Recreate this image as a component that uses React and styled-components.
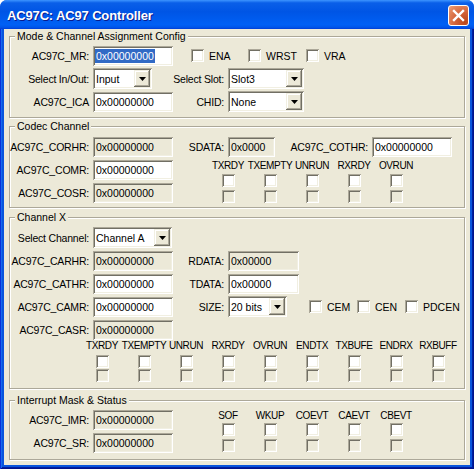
import styled, { createGlobalStyle } from "styled-components";

const GlobalStyle = createGlobalStyle`
  html, body {
    margin: 0;
    padding: 0;
    background: #fff;
  }
  body {
    font-family: "Liberation Sans", Arial, sans-serif;
    font-size: 10.5px;
    color: #000;
  }
  * {
    box-sizing: border-box;
  }
`;

const sunken = `
  box-shadow: inset 1px 1px 0 #aca899, inset -1px -1px 0 #fff,
    inset 2px 2px 0 #716f64, inset -2px -2px 0 #f1efe2;
`;

const raised = `
  box-shadow: inset -1px -1px 0 #716f64, inset 1px 1px 0 #f1efe2,
    inset -2px -2px 0 #aca899, inset 2px 2px 0 #fff;
`;

const Window = styled.div`
  width: 474px;
  height: 469px;
  display: flex;
  flex-direction: column;
  border-radius: 7px 7px 0 0;
  overflow: hidden;
  background: #0855dd;
`;

const TitleBar = styled.div`
  height: 29px;
  flex: none;
  display: flex;
  align-items: center;
  justify-content: space-between;
  padding: 0 5px 0 7px;
  background: linear-gradient(
    180deg,
    #3d95ff 0%,
    #0a5fe8 10%,
    #0055e5 40%,
    #0060f5 85%,
    #0056ea 94%,
    #003dd7 100%
  );
`;

const Title = styled.span`
  color: #fff;
  font: bold 13px "Liberation Sans", Arial, sans-serif;
  letter-spacing: -0.15px;
  text-shadow: 1px 1px 0 #0a1a8c;
  margin-top: 1px;
`;

const CloseButton = styled.button`
  width: 21px;
  height: 21px;
  margin-top: 2px;
  padding: 0;
  border: 1px solid #fff;
  border-radius: 3px;
  display: flex;
  align-items: center;
  justify-content: center;
  background: radial-gradient(
    circle at 85% 85%,
    #b9461b 0%,
    #d3643a 45%,
    #e4875d 80%,
    #efa57f 100%
  );
`;

const Frame = styled.div`
  flex: 1;
  display: flex;
  padding: 0 4px 4px;
  box-shadow: inset 1px 0 0 #0831d9, inset -1px -1px 0 #00138c,
    inset 2px 0 0 #166aee, inset -2px -2px 0 #001ea0;
`;

const Body = styled.div`
  flex: 1;
  background: #ece9d8;
  padding: 1px 5px 0;
  display: flex;
  flex-direction: column;
`;

const Group = styled.fieldset`
  margin: ${(p) => p.$mt || 0}px 0 0;
  padding: ${(p) => p.$pt}px 0 ${(p) => p.$pb}px;
  min-width: 0;
  border: 1px solid #aca899;
  box-shadow: 1px 1px 0 #fff, inset 1px 1px 0 #fff;
`;

const Legend = styled.legend`
  margin-left: 5px;
  padding: 0 2px;
  height: 13px;
  line-height: 13px;
  background: #ece9d8;
`;

const Rows = styled.div`
  display: flex;
  flex-direction: column;
  gap: 2px;
`;

const Split = styled.div`
  display: flex;
  align-items: flex-start;
`;

const Row = styled.div`
  display: flex;
  align-items: center;
  height: 21px;
`;

const Label = styled.span`
  width: ${(p) => p.$w}px;
  flex: none;
  padding-right: 4px;
  text-align: right;
  white-space: nowrap;
  letter-spacing: -0.2px;
`;

const TextBox = styled.div`
  width: ${(p) => p.$w}px;
  height: 20px;
  flex: none;
  display: flex;
  align-items: center;
  padding: 0 3px;
  white-space: nowrap;
  overflow: hidden;
  background: ${(p) => (p.$readOnly ? "#ece9d8" : "#fff")};
  ${sunken}
`;

const Selected = styled.span`
  background: #316ac5;
  color: #fff;
  line-height: 14px;
  padding: 0 1px;
  margin-left: -1px;
`;

const Select = styled.div`
  width: ${(p) => p.$w}px;
  height: 21px;
  flex: none;
  display: flex;
  align-items: center;
  padding: 2px;
  background: #fff;
  ${sunken}
`;

const SelectText = styled.span`
  flex: 1;
  padding-left: 1px;
  white-space: nowrap;
`;

const ArrowButton = styled.span`
  width: 16px;
  height: 17px;
  flex: none;
  display: flex;
  align-items: center;
  justify-content: center;
  background: #ece9d8;
  ${raised}
`;

const Checks = styled.div`
  display: flex;
  align-items: center;
  margin-left: ${(p) => p.$ml}px;
`;

const CheckItem = styled.label`
  display: flex;
  align-items: center;
  gap: 5px;
  flex: none;
  width: ${(p) => (p.$w ? `${p.$w}px` : "auto")};
  white-space: nowrap;
`;

const CheckBox = styled.span`
  display: block;
  width: 13px;
  height: 13px;
  flex: none;
  margin-top: ${(p) => p.$mt || 0}px;
  background: ${(p) => (p.$disabled ? "#ece9d8" : "#fff")};
  ${sunken}
`;

const Flags = styled.div`
  display: flex;
  margin-left: ${(p) => p.$ml}px;
`;

const Flag = styled.div`
  width: 42px;
  display: flex;
  flex-direction: column;
  align-items: center;
`;

const FlagName = styled.span`
  height: ${(p) => p.$h}px;
  line-height: ${(p) => p.$h}px;
  margin-bottom: ${(p) => p.$mb}px;
  font-size: 10px;
  letter-spacing: -0.4px;
  white-space: nowrap;
`;

function Combo({ w, value }) {
  return (
    <Select $w={w}>
      <SelectText>{value}</SelectText>
      <ArrowButton>
        <svg width="7" height="4" viewBox="0 0 7 4">
          <polygon points="0,0 7,0 3.5,4" fill="#000" />
        </svg>
      </ArrowButton>
    </Select>
  );
}

function FlagSet({ names, ml, labelH, mb, gap }) {
  return (
    <Flags $ml={ml}>
      {names.map((n) => (
        <Flag key={n}>
          <FlagName $h={labelH} $mb={mb}>
            {n}
          </FlagName>
          <CheckBox />
          <CheckBox $disabled $mt={gap} />
        </Flag>
      ))}
    </Flags>
  );
}

const HEX = "0x00000000";

export default function App() {
  return (
    <>
      <GlobalStyle />
      <Window>
        <TitleBar>
          <Title>AC97C: AC97 Controller</Title>
          <CloseButton>
            <svg width="13" height="13" viewBox="0 0 13 13">
              <path
                d="M2 2 L11 11 M11 2 L2 11"
                stroke="#fff"
                strokeWidth="2.4"
                strokeLinecap="square"
              />
            </svg>
          </CloseButton>
        </TitleBar>
        <Frame>
          <Body>
            <Group $pt={2} $pb={5}>
              <Legend>Mode &amp; Channel Assignment Config</Legend>
              <Rows>
                <Row>
                  <Label $w={83}>AC97C_MR:</Label>
                  <TextBox $w={80}>
                    <Selected>{HEX}</Selected>
                  </TextBox>
                  <Checks $ml={18}>
                    <CheckItem $w={57}>
                      <CheckBox />
                      ENA
                    </CheckItem>
                    <CheckItem $w={58}>
                      <CheckBox />
                      WRST
                    </CheckItem>
                    <CheckItem>
                      <CheckBox />
                      VRA
                    </CheckItem>
                  </Checks>
                </Row>
                <Row>
                  <Label $w={83}>Select In/Out:</Label>
                  <Combo w={59} value="Input" />
                  <Label $w={76}>Select Slot:</Label>
                  <Combo w={76} value="Slot3" />
                </Row>
                <Row>
                  <Label $w={83}>AC97C_ICA</Label>
                  <TextBox $w={80}>{HEX}</TextBox>
                  <Label $w={55}>CHID:</Label>
                  <Combo w={76} value="None" />
                </Row>
              </Rows>
            </Group>

            <Group $mt={2} $pt={3} $pb={4}>
              <Legend>Codec Channel</Legend>
              <Rows>
                <Row>
                  <Label $w={83}>AC97C_CORHR:</Label>
                  <TextBox $w={80} $readOnly>
                    {HEX}
                  </TextBox>
                  <Label $w={55}>SDATA:</Label>
                  <TextBox $w={47} $readOnly>
                    0x0000
                  </TextBox>
                  <Label $w={97}>AC97C_COTHR:</Label>
                  <TextBox $w={80}>{HEX}</TextBox>
                </Row>
                <Split>
                  <Rows>
                    <Row>
                      <Label $w={83}>AC97C_COMR:</Label>
                      <TextBox $w={80}>{HEX}</TextBox>
                    </Row>
                    <Row>
                      <Label $w={83}>AC97C_COSR:</Label>
                      <TextBox $w={80} $readOnly>
                        {HEX}
                      </TextBox>
                    </Row>
                  </Rows>
                  <FlagSet
                    names={["TXRDY", "TXEMPTY", "UNRUN", "RXRDY", "OVRUN"]}
                    ml={34}
                    labelH={14}
                    mb={1}
                    gap={3}
                  />
                </Split>
              </Rows>
            </Group>

            <Group $mt={3} $pt={3} $pb={6}>
              <Legend>Channel X</Legend>
              <Rows>
                <Row>
                  <Label $w={83}>Select Channel:</Label>
                  <Combo w={79} value="Channel A" />
                </Row>
                <Row>
                  <Label $w={83}>AC97C_CARHR:</Label>
                  <TextBox $w={80} $readOnly>
                    {HEX}
                  </TextBox>
                  <Label $w={55}>RDATA:</Label>
                  <TextBox $w={71} $readOnly>
                    0x00000
                  </TextBox>
                </Row>
                <Row>
                  <Label $w={83}>AC97C_CATHR:</Label>
                  <TextBox $w={80}>{HEX}</TextBox>
                  <Label $w={55}>TDATA:</Label>
                  <TextBox $w={71}>0x00000</TextBox>
                </Row>
                <Row>
                  <Label $w={83}>AC97C_CAMR:</Label>
                  <TextBox $w={80}>{HEX}</TextBox>
                  <Label $w={55}>SIZE:</Label>
                  <Combo w={59} value="20 bits" />
                  <Checks $ml={22}>
                    <CheckItem $w={48}>
                      <CheckBox />
                      CEM
                    </CheckItem>
                    <CheckItem $w={48}>
                      <CheckBox />
                      CEN
                    </CheckItem>
                    <CheckItem>
                      <CheckBox />
                      PDCEN
                    </CheckItem>
                  </Checks>
                </Row>
                <Row>
                  <Label $w={83}>AC97C_CASR:</Label>
                  <TextBox $w={80} $readOnly>
                    {HEX}
                  </TextBox>
                </Row>
              </Rows>
              <FlagSet
                names={[
                  "TXRDY",
                  "TXEMPTY",
                  "UNRUN",
                  "RXRDY",
                  "OVRUN",
                  "ENDTX",
                  "TXBUFE",
                  "ENDRX",
                  "RXBUFF",
                ]}
                ml={71}
                labelH={12}
                mb={3}
                gap={1}
              />
            </Group>

            <Group $mt={5} $pt={2} $pb={6}>
              <Legend>Interrupt Mask &amp; Status</Legend>
              <Split>
                <Rows>
                  <Row>
                    <Label $w={83}>AC97C_IMR:</Label>
                    <TextBox $w={80} $readOnly>
                      {HEX}
                    </TextBox>
                  </Row>
                  <Row>
                    <Label $w={83}>AC97C_SR:</Label>
                    <TextBox $w={80} $readOnly>
                      {HEX}
                    </TextBox>
                  </Row>
                </Rows>
                <FlagSet
                  names={["SOF", "WKUP", "COEVT", "CAEVT", "CBEVT"]}
                  ml={34}
                  labelH={13}
                  mb={1}
                  gap={3}
                />
              </Split>
            </Group>
          </Body>
        </Frame>
      </Window>
    </>
  );
}
